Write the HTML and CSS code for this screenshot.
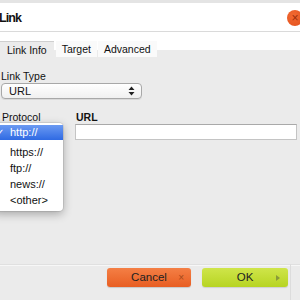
FILE: index.html
```html
<!DOCTYPE html>
<html>
<head>
<meta charset="utf-8">
<link rel="stylesheet" href="styles.css">
</head>
<body>
<div class="dialog">
  <div class="titlebar">
    <span class="title">Link</span>
    <span class="close">×</span>
  </div>
  <div class="tabs">
    <div class="tab active">Link Info</div>
    <div class="tab">Target</div>
    <div class="tab">Advanced</div>
  </div>
  <div class="panel">
    <div class="field">
      <label class="lbl">Link Type</label>
      <div class="select"><span>URL</span>
        <svg class="arrows" width="7" height="10" viewBox="0 0 7 10"><path d="M3.5 0.5 L6.5 4 H0.5Z M3.5 9.5 L6.5 6 H0.5Z" fill="#222"/></svg>
      </div>
    </div>
    <div class="row">
      <div class="col-proto">
        <label class="lbl">Protocol</label>
        <div class="menu">
          <div class="item sel"><span class="check">✓</span>http://</div>
          <div class="item">https://</div>
          <div class="item">ftp://</div>
          <div class="item">news://</div>
          <div class="item">&lt;other&gt;</div>
        </div>
      </div>
      <div class="col-url">
        <label class="lbl bold">URL</label>
        <div class="input"></div>
      </div>
    </div>
  </div>
  <div class="footer">
    <div class="btn cancel">Cancel<span class="x">×</span></div>
    <div class="btn ok">OK<span class="tri"></span></div>
    <div class="fedge"></div>
  </div>
</div>
</body>
</html>
```

FILE: styles.css
```css
html, body {
  margin: 0;
  padding: 0;
  width: 300px;
  height: 300px;
  overflow: hidden;
  background: #ebebeb;
  font-family: "Liberation Sans", Arial, sans-serif;
  color: #111;
}
.dialog {
  display: flex;
  flex-direction: column;
  height: 300px;
  border-top: 3px solid #e4e4e4;
  box-sizing: border-box;
}
.titlebar {
  height: 28px;
  background: #fff;
  border-bottom: 1px solid #dadada;
  display: flex;
  align-items: center;
  justify-content: space-between;
}
.title {
  font-weight: bold;
  font-size: 12.5px;
  letter-spacing: -0.9px;
  margin-left: -1px;
  margin-top: 1px;
}
.close {
  width: 16px;
  height: 16px;
  border-radius: 50%;
  background: radial-gradient(circle at 40% 35%, #f26a32, #e3501c);
  color: #9c2f0c;
  font-size: 12px;
  line-height: 16px;
  text-align: center;
  margin-right: -3px;
  margin-top: 1px;
}
.tabs {
  display: flex;
  gap: 1px;
  padding-top: 9px;
  background: linear-gradient(#fff 18px, #ebebeb 18px);
  height: 16px;
}
.tab {
  height: 16px;
  font-size: 10.5px;
  line-height: 17px;
  padding: 0 6px;
  background: #fafafa;
  color: #111;
}
.tab.active {
  background: #ebebeb;
  border-top: 1px solid #cfcfcf;
  height: 15px;
  line-height: 16px;
  padding: 0 7px;
  margin-right: 1px;
}
.panel {
  flex: 1;
  padding: 13px 0 0 1px;
  display: flex;
  flex-direction: column;
}
.lbl {
  display: block;
  font-size: 10.5px;
  line-height: 12px;
}
.lbl.bold {
  font-weight: bold;
}
.select {
  height: 14px;
  margin-top: 1px;
  border: 1px solid #a8a8a8;
  border-radius: 4px;
  background: linear-gradient(#ffffff, #f0f0f0);
  display: flex;
  align-items: center;
  justify-content: space-between;
  font-size: 11px;
  padding: 0 6px 0 7px;
  width: 126px;
  box-shadow: 0 1px 0 #d9d9d9;
}
.arrows {
  display: block;
}
.row {
  display: flex;
  margin-top: 12px;
}
.col-proto {
  width: 74px;
  position: relative;
}
.col-proto .lbl {
  margin-left: 1px;
}
.col-url .lbl {
  margin-left: 1px;
}
.col-url {
  flex: 1;
}
.input {
  height: 14px;
  margin-top: 1px;
  background: #fff;
  border: 1px solid #c4c4c4;
  border-top-color: #a9a9a9;
  width: 220px;
}
.menu {
  position: absolute;
  left: -8px;
  top: 12px;
  width: 70px;
  padding: 2px 0 3px;
  background: #fff;
  border-radius: 4px;
  box-shadow: 0 3px 10px rgba(0,0,0,0.3), 0 0 0 1px rgba(0,0,0,0.08);
  z-index: 2;
}
.item {
  height: 16px;
  line-height: 16px;
  font-size: 11px;
  padding-left: 17px;
  position: relative;
  color: #111;
}
.item.sel {
  background: linear-gradient(#6b9af2, #2f6ae3);
  color: #fff;
  height: 15px;
  line-height: 15px;
  margin-bottom: 4px;
}
.check {
  position: absolute;
  left: 3px;
  font-size: 10px;
}
.footer {
  height: 32px;
  border-top: 1px solid #f7f7f7;
  box-shadow: 0 -1px 0 #e0e0e0;
  display: flex;
  align-items: flex-start;
  padding-top: 2px;
  padding-left: 107px;
  gap: 11px;
}
.btn {
  width: 84px;
  height: 19px;
  border-radius: 3px;
  font-size: 11.5px;
  line-height: 19px;
  text-align: center;
  position: relative;
  color: #222;
}
.cancel {
  background: linear-gradient(#f47f45, #e85e22);
  box-shadow: 0 1px 1px rgba(0,0,0,0.15);
}
.ok {
  width: 86px;
  background: linear-gradient(#cfe54a, #b7d422);
  box-shadow: 0 1px 1px rgba(0,0,0,0.12);
}
.x {
  position: absolute;
  right: 7px;
  top: 0;
  font-size: 10px;
  color: #a44a1c;
}
.tri {
  position: absolute;
  right: 8px;
  top: 7px;
  width: 0;
  height: 0;
  border-left: 4px solid #8a9a3a;
  border-top: 3px solid transparent;
  border-bottom: 3px solid transparent;
}
.fedge {
  width: 1px;
  height: 36px;
  margin-top: -4px;
  margin-left: -9px;
  background: #dcdcdc;
}
```
